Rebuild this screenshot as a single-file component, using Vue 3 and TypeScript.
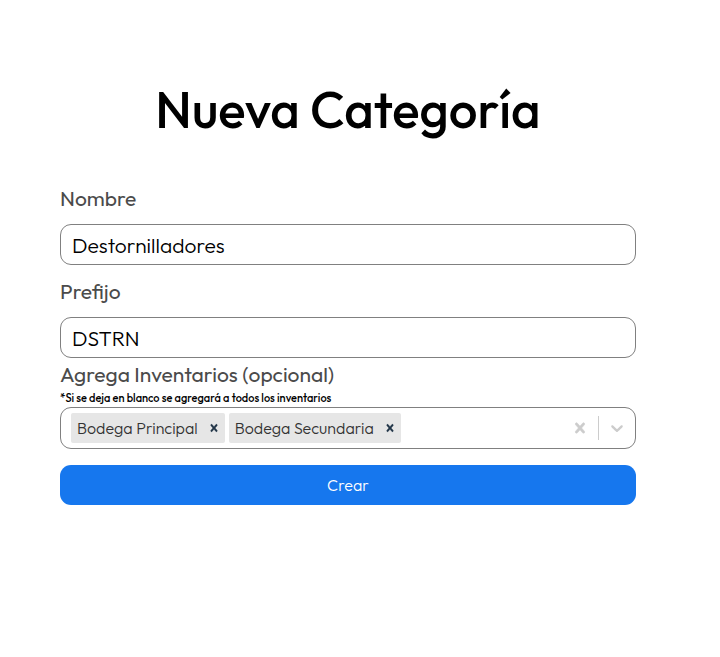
<script setup lang="ts">
import { ref } from 'vue'

const nombre = ref('Destornilladores')
const prefijo = ref('DSTRN')
const inventarios = ref<string[]>(['Bodega Principal', 'Bodega Secundaria'])

const crossPath =
  'M14.348 14.849c-0.469 0.469-1.229 0.469-1.697 0l-2.651-3.030-2.651 3.029c-0.469 0.469-1.229 0.469-1.697 0-0.469-0.469-0.469-1.229 0-1.697l2.758-3.15-2.759-3.152c-0.469-0.469-0.469-1.228 0-1.697s1.228-0.469 1.697 0l2.652 3.031 2.651-3.031c0.469-0.469 1.228-0.469 1.697 0s0.469 1.229 0 1.697l-2.758 3.152 2.758 3.15c0.469 0.469 0.469 1.229 0 1.698z'
const chevronPath =
  'M4.516 7.548c0.436-0.446 1.043-0.481 1.576 0l3.908 3.747 3.908-3.747c0.533-0.481 1.141-0.446 1.574 0 0.436 0.445 0.408 1.197 0 1.615-0.406 0.418-4.695 4.502-4.695 4.502-0.217 0.223-0.502 0.335-0.787 0.335s-0.57-0.112-0.789-0.335c0 0-4.287-4.084-4.695-4.502s-0.436-1.17 0-1.615z'

function quitar(nombreInventario: string) {
  inventarios.value = inventarios.value.filter((i) => i !== nombreInventario)
}
</script>

<template>
  <main class="page">
    <h1 class="title">Nueva Categoría</h1>
    <form class="form" @submit.prevent>
      <div class="field">
        <label class="label" for="nombre">Nombre</label>
        <input id="nombre" v-model="nombre" class="input" type="text" />
      </div>
      <div class="field">
        <label class="label" for="prefijo">Prefijo</label>
        <input id="prefijo" v-model="prefijo" class="input" type="text" />
      </div>
      <label class="label select-label" for="inventarios">Agrega Inventarios (opcional)</label>
      <p class="hint">*Si se deja en blanco se agregará a todos los inventarios</p>
      <div class="select">
        <div class="values">
          <div v-for="item in inventarios" :key="item" class="chip">
            <span class="chip-text">{{ item }}</span>
            <button class="chip-remove" type="button" :aria-label="`Quitar ${item}`" @click="quitar(item)">
              <svg class="cross" width="14" height="14" viewBox="0 0 20 20"><path :d="crossPath" /></svg>
            </button>
          </div>
          <input id="inventarios" class="search" type="text" autocomplete="off" role="combobox" aria-expanded="false" />
        </div>
        <button class="indicator" type="button" aria-label="Limpiar" @click="inventarios = []">
          <svg class="cross" width="20" height="20" viewBox="0 0 20 20"><path :d="crossPath" /></svg>
        </button>
        <span class="separator"></span>
        <button class="indicator" type="button" aria-label="Abrir opciones">
          <svg width="20" height="20" viewBox="0 0 20 20"><path :d="chevronPath" /></svg>
        </button>
      </div>
      <button class="submit" type="submit">Crear</button>
    </form>
  </main>
</template>

<style>
body {
  background: #fff;
}
</style>

<style scoped>
.page,
.page * {
  box-sizing: border-box;
}
.page {
  padding: 76px 84px 40px 60px;
  font-family: Outfit, Lato, sans-serif;
  color: #000;
}
.title {
  margin: 0 0 38px;
  font-size: 51px;
  line-height: 66px;
  font-weight: 500;
  text-align: center;
}
.form {
  display: flex;
  flex-direction: column;
}
.field {
  display: flex;
  flex-direction: column;
}
.label {
  font-size: 21px;
  line-height: 28px;
  color: #4b4b4b;
}
.field .label {
  padding: 4px 0 12px;
}
.field + .field {
  padding-top: 8px;
}
.input {
  width: 100%;
  height: 41px;
  padding: 0 11px;
  border: 1px solid #808080;
  border-radius: 11px;
  background: #fff;
  font: inherit;
  font-size: 21px;
  font-weight: 300;
  color: #000;
}
.select-label {
  padding-top: 2px;
}
.hint {
  margin: 0;
  padding-top: 2px;
  font-size: 11px;
  line-height: 17px;
  font-weight: 500;
}
.select {
  display: flex;
  align-items: center;
  min-height: 42px;
  border: 1px solid #808080;
  border-radius: 11px;
}
.values {
  display: flex;
  flex: 1;
  flex-wrap: wrap;
  gap: 4px;
  min-width: 0;
  padding: 4px 10px;
}
.chip {
  display: flex;
  height: 30px;
  border-radius: 2px;
  background: #e6e6e6;
}
.chip-text {
  padding: 0 5px 0 6px;
  font-size: 16px;
  line-height: 30px;
  font-weight: 300;
  color: #333;
}
.chip-remove {
  display: flex;
  align-items: center;
  padding: 0 4px;
  border: 0;
  background: none;
  color: #213547;
  fill: currentColor;
}
.cross {
  stroke: currentColor;
  stroke-width: 0.6px;
}
.search {
  flex: 1;
  width: 20px;
  min-width: 2px;
  padding: 0;
  border: 0;
  outline: 0;
  background: none;
  font: inherit;
}
.indicator {
  display: flex;
  padding: 8px;
  border: 0;
  background: none;
  color: #ccc;
  fill: currentColor;
}
.separator {
  align-self: stretch;
  width: 1px;
  margin: 8px 0;
  background: #ccc;
}
.submit {
  height: 40px;
  margin-top: 16px;
  border: 0;
  border-radius: 11px;
  background: #1677ee;
  font: inherit;
  font-size: 16px;
  font-weight: 300;
  color: #fff;
}
</style>
